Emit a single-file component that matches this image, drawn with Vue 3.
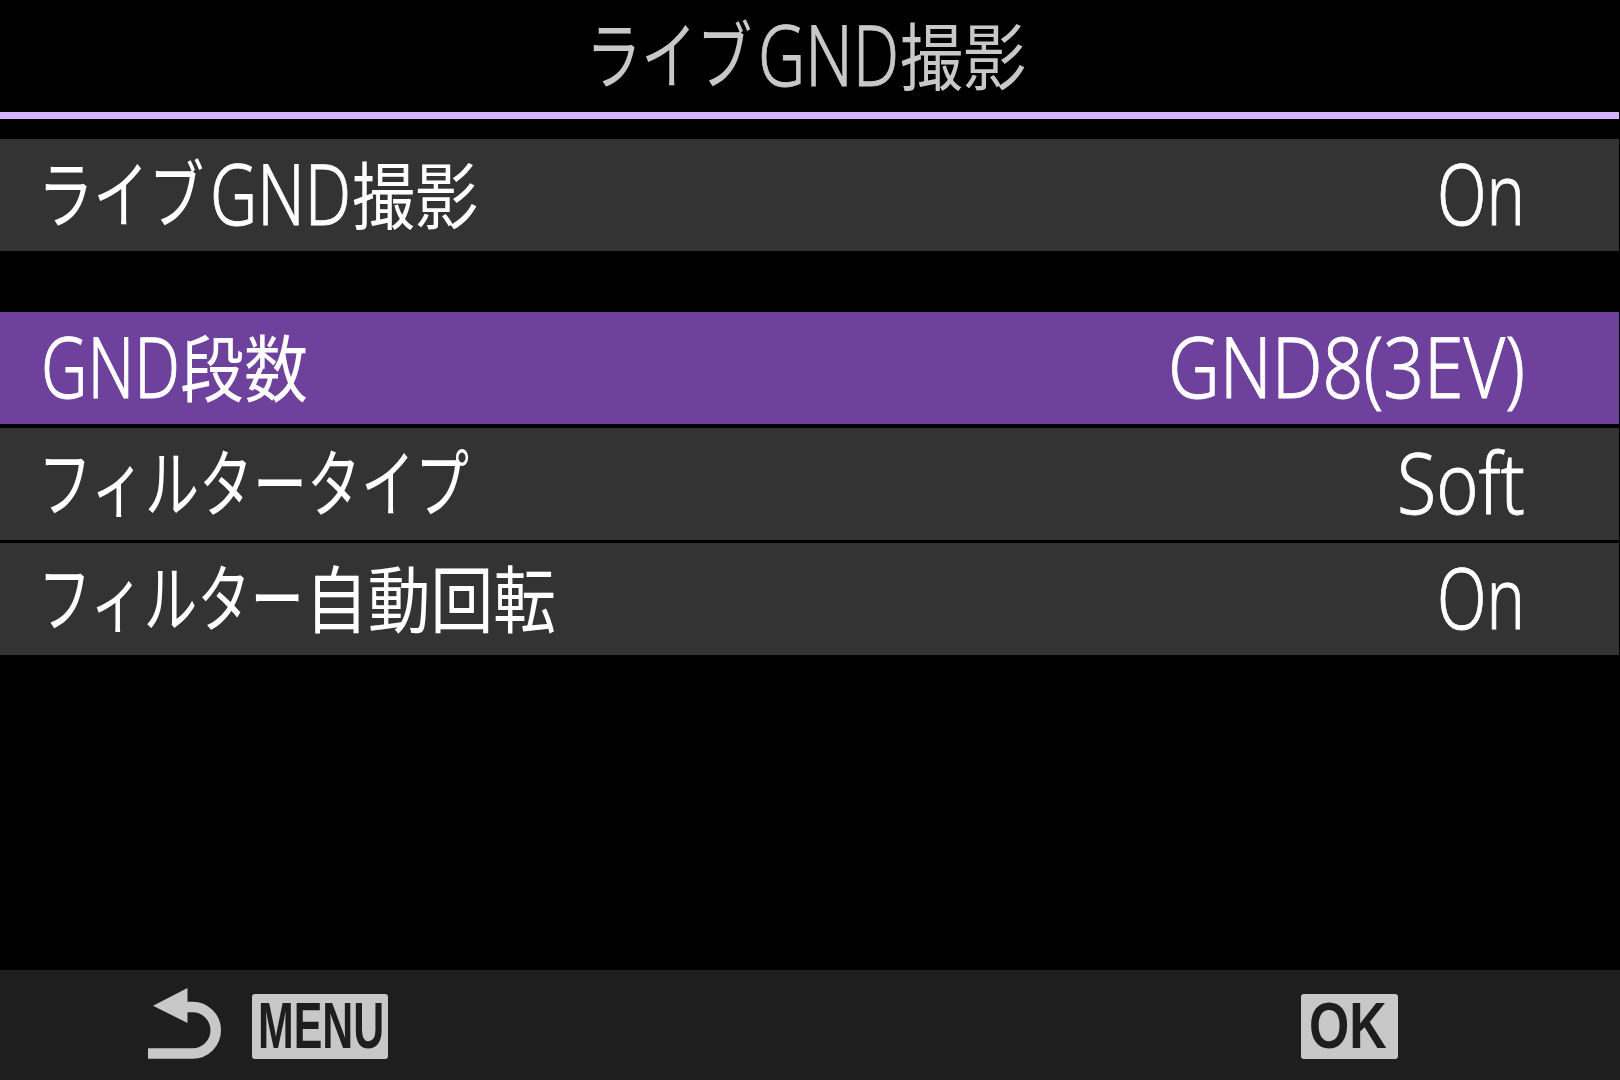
<script setup>
const fonts = {
  latin: '300 85px "Noto Sans"',
  kana: '400 74px "Noto Sans CJK JP"',
  kanji: '400 73px "Noto Sans CJK JP"',
}

const ctx = document.createElement('canvas').getContext('2d')
// camera font is much narrower than anything installed, so squeeze each run to its width
const inkStyle = (seg) => {
  ctx.font = fonts[seg.k]
  return { transform: `scaleX(${seg.w / ctx.measureText(seg.t).width})` }
}
const segStyle = (seg) => ({ width: seg.w + 'px', marginLeft: (seg.m || 0) + 'px' })

const title = [
  { t: 'ライブ', k: 'kana', w: 166 },
  { t: 'GND', k: 'latin', w: 141, m: 6 },
  { t: '撮影', k: 'kanji', w: 126, m: 1 },
]

const rows = [
  {
    id: 'live',
    label: title,
    value: [{ t: 'On', k: 'latin', w: 88 }],
    spaced: true,
  },
  {
    id: 'steps',
    label: [
      { t: 'GND', k: 'latin', w: 139, m: 3 },
      { t: '段数', k: 'kanji', w: 128 },
    ],
    value: [{ t: 'GND8(3EV)', k: 'latin', w: 357 }],
    active: true,
  },
  {
    id: 'type',
    label: [{ t: 'フィルタータイプ', k: 'kana', w: 432 }],
    value: [{ t: 'Soft', k: 'latin', w: 128 }],
  },
  {
    id: 'rotate',
    label: [
      { t: 'フィルター', k: 'kana', w: 267 },
      { t: '自動回転', k: 'kanji', w: 251 },
    ],
    value: [{ t: 'On', k: 'latin', w: 88 }],
  },
]
</script>

<template>
  <div class="screen">
    <header class="title-bar">
      <div class="text">
        <span v-for="seg in title" :key="seg.t" class="seg" :style="segStyle(seg)">
          <span class="ink" :class="seg.k" :style="inkStyle(seg)">{{ seg.t }}</span>
        </span>
      </div>
    </header>
    <div class="title-line"></div>

    <div class="rows">
      <div
        v-for="row in rows"
        :key="row.id"
        class="row"
        :class="{ active: row.active, spaced: row.spaced }"
      >
        <div class="text">
          <span v-for="seg in row.label" :key="seg.t" class="seg" :style="segStyle(seg)">
            <span class="ink" :class="seg.k" :style="inkStyle(seg)">{{ seg.t }}</span>
          </span>
        </div>
        <div class="text">
          <span v-for="seg in row.value" :key="seg.t" class="seg" :style="segStyle(seg)">
            <span class="ink" :class="seg.k" :style="inkStyle(seg)">{{ seg.t }}</span>
          </span>
        </div>
      </div>
    </div>

    <footer class="footer">
      <div class="hint back">
        <svg class="back-icon" width="73" height="71" viewBox="0 0 73 71">
          <path d="M5 17.7 39.5 0V35Z" fill="#c8c8c8" />
          <path d="M36 19H44.5A23.2 23.2 0 0 1 44.5 65.5H0" fill="none" stroke="#c8c8c8" stroke-width="10.5" />
        </svg>
        <span class="badge menu"><span class="badge-ink">MENU</span></span>
      </div>
      <div class="hint ok">
        <span class="badge ok-badge"><span class="badge-ink">OK</span></span>
      </div>
    </footer>
  </div>
</template>

<style scoped>
.screen {
  width: 1620px;
  height: 1080px;
  display: flex;
  flex-direction: column;
  background: #000;
  color: #fff;
  overflow: hidden;
}

.title-bar {
  height: 112px;
  display: flex;
  align-items: center;
  justify-content: center;
  padding: 0 8px 0 0;
  box-sizing: border-box;
  color: #c8c8c8;
}

.title-line {
  height: 7px;
  margin-right: 1px;
  background: #d4b4ff;
}

.rows {
  margin: 20px 1px 0 0;
  display: flex;
  flex-direction: column;
}

.row {
  height: 112px;
  padding: 0 94px 0 38px;
  display: flex;
  align-items: center;
  justify-content: space-between;
  background: #333;
  margin-bottom: 3px;
}

.row.spaced {
  margin-bottom: 61px;
}

.row.active {
  background: #6e419d;
  margin-bottom: 4px;
}

.text {
  display: flex;
  align-items: center;
  height: 100%;
}

.seg {
  display: block;
  height: 80px;
  flex-shrink: 0;
}

.ink {
  display: inline-block;
  line-height: 80px;
  white-space: nowrap;
  transform-origin: left center;
}

.latin {
  font-family: "Noto Sans", sans-serif;
  font-size: 85px;
  font-weight: 300;
  -webkit-text-stroke: 0.9px currentColor;
  margin-top: -3px;
}

.kana {
  font-family: "Noto Sans CJK JP", sans-serif;
  font-size: 74px;
  font-weight: 400;
  margin-top: -5px;
}

.kanji {
  font-family: "Noto Sans CJK JP", sans-serif;
  font-size: 73px;
  font-weight: 400;
  margin-top: -4px;
}

.footer {
  margin-top: auto;
  height: 110px;
  background: #1e1e1e;
  display: flex;
  justify-content: space-between;
  padding: 18px 222px 0 148px;
  box-sizing: border-box;
}

.hint {
  display: flex;
  align-items: flex-start;
}

.back-icon {
  flex-shrink: 0;
}

.badge {
  display: block;
  height: 65px;
  margin-top: 6px;
  background: #c8c8c8;
  border-radius: 3px;
  color: #1e1e1e;
  font-family: "Liberation Sans", sans-serif;
  font-weight: 700;
  font-size: 64px;
  line-height: 65px;
}

.badge-ink {
  display: inline-block;
  white-space: nowrap;
  transform-origin: left center;
}

.menu {
  width: 136px;
  margin-left: 31px;
}

.menu .badge-ink {
  transform: translateX(6px) scaleX(0.67);
}

.ok-badge {
  width: 97px;
}

.ok-badge .badge-ink {
  transform: translateX(8px) scaleX(0.81);
}
</style>

<style>
html, body {
  margin: 0;
  background: #000;
}
</style>
